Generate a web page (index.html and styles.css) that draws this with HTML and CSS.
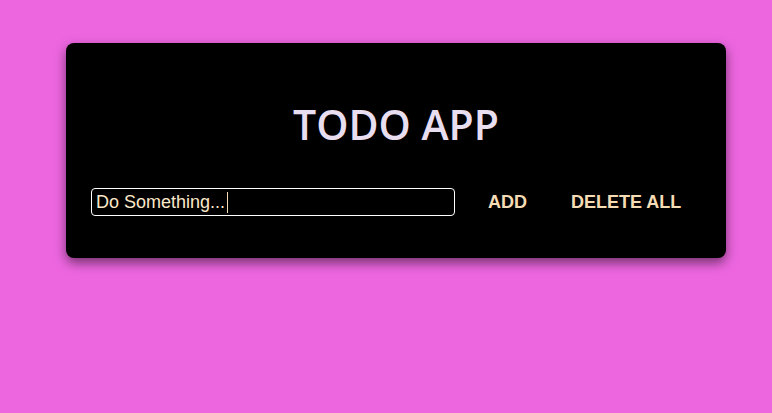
FILE: index.html
```html
<!DOCTYPE html>
<html>
<head>
<meta charset="utf-8">
<link rel="stylesheet" href="styles.css">
</head>
<body>
<div class="card">
  <h1 class="title">TODO APP</h1>
  <div class="row">
    <div class="field"><span class="value">Do Something...</span><span class="caret"></span></div>
    <button class="btn">ADD</button>
    <button class="btn">DELETE ALL</button>
  </div>
</div>
</body>
</html>
```
FILE: styles.css
```css
html, body { margin: 0; padding: 0; }
body {
  background: #ed66e0;
  width: 772px;
  height: 413px;
  overflow: hidden;
  font-family: "Liberation Sans", Arial, sans-serif;
}
.card {
  margin: 43px 0 0 66px;
  width: 660px;
  height: 215px;
  box-sizing: border-box;
  background: #000;
  border-radius: 8px;
  box-shadow: 0 5px 12px rgba(0,0,0,0.5);
  padding-top: 56px;
}
.title {
  margin: 0;
  text-align: center;
  font-family: "Open Sans", "DejaVu Sans", sans-serif;
  font-weight: 600;
  font-size: 41px;
  line-height: 50px;
  color: #e8def0;
}
.row {
  display: flex;
  align-items: center;
  margin-top: 39px;
  padding-left: 25px;
}
.field {
  width: 364px;
  height: 28px;
  box-sizing: border-box;
  border: 1px solid #fff;
  border-radius: 4px;
  display: flex;
  align-items: center;
  padding-left: 4px;
  color: #fbe8c8;
  font-size: 18px;
}
.caret {
  display: inline-block;
  width: 1px;
  height: 21px;
  background: #f6dcb4;
  margin-left: 2px;
}
.btn {
  background: none;
  border: none;
  color: #f6dcb4;
  font-family: "Liberation Sans", Arial, sans-serif;
  font-weight: 700;
  font-size: 18px;
  padding: 0;
}
.btn:first-of-type { margin-left: 33px; }
.btn + .btn { margin-left: 44px; }
```
